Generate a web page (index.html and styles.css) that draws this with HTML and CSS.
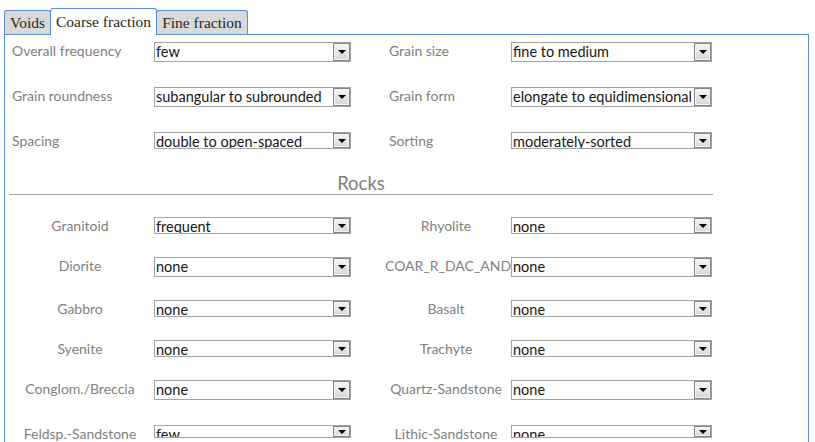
FILE: index.html
```html
<!DOCTYPE html>
<html>
<head>
<meta charset="utf-8">
<link rel="stylesheet" href="styles.css">
</head>
<body>
<div class="tabs">
  <div class="tab tab-voids">Voids</div>
  <div class="tab active tab-coarse">Coarse fraction</div>
  <div class="tab tab-fine">Fine fraction</div>
</div>
<div class="panel">
  <div class="grid props">
    <div class="lbl left">Overall frequency</div>
    <div class="combo h20"><span class="val">few</span><span class="btn"></span></div>
    <div class="lbl right">Grain size</div>
    <div class="combo h20"><span class="val">fine to medium</span><span class="btn"></span></div>

    <div class="lbl left">Grain roundness</div>
    <div class="combo h20"><span class="val">subangular to subrounded</span><span class="btn"></span></div>
    <div class="lbl right">Grain form</div>
    <div class="combo h20"><span class="val">elongate to equidimensional</span><span class="btn"></span></div>

    <div class="lbl left">Spacing</div>
    <div class="combo h17"><span class="val">double to open-spaced</span><span class="btn"></span></div>
    <div class="lbl right">Sorting</div>
    <div class="combo h17"><span class="val">moderately-sorted</span><span class="btn"></span></div>
  </div>

  <div class="section-title">Rocks</div>

  <div class="grid rocks">
    <div class="lbl cl">Granitoid</div>
    <div class="combo h17"><span class="val">frequent</span><span class="btn"></span></div>
    <div class="lbl cr">Rhyolite</div>
    <div class="combo h17"><span class="val">none</span><span class="btn"></span></div>

    <div class="lbl cl">Diorite</div>
    <div class="combo h20"><span class="val">none</span><span class="btn"></span></div>
    <div class="lbl cr">COAR_R_DAC_AND</div>
    <div class="combo h20"><span class="val">none</span><span class="btn"></span></div>

    <div class="lbl cl">Gabbro</div>
    <div class="combo h17"><span class="val">none</span><span class="btn"></span></div>
    <div class="lbl cr">Basalt</div>
    <div class="combo h17"><span class="val">none</span><span class="btn"></span></div>

    <div class="lbl cl">Syenite</div>
    <div class="combo h17"><span class="val">none</span><span class="btn"></span></div>
    <div class="lbl cr">Trachyte</div>
    <div class="combo h17"><span class="val">none</span><span class="btn"></span></div>

    <div class="lbl cl">Conglom./Breccia</div>
    <div class="combo h20"><span class="val">none</span><span class="btn"></span></div>
    <div class="lbl cr">Quartz-Sandstone</div>
    <div class="combo h20"><span class="val">none</span><span class="btn"></span></div>

    <div class="lbl cl">Feldsp.-Sandstone</div>
    <div class="combo h13"><span class="val">few</span><span class="btn"></span></div>
    <div class="lbl cr">Lithic-Sandstone</div>
    <div class="combo h13"><span class="val">none</span><span class="btn"></span></div>
  </div>
</div>
</body>
</html>
```
FILE: styles.css
```css
html, body {
  margin: 0;
  padding: 0;
  background: #ffffff;
  overflow: hidden;
}
body {
  width: 815px;
  height: 442px;
  font-family: Lato, "Liberation Sans", sans-serif;
}

.tabs {
  display: flex;
  align-items: flex-end;
  padding-left: 4px;
  padding-top: 8px;
  height: 26px;
  position: relative;
  z-index: 2;
}
.tab {
  box-sizing: border-box;
  height: 24px;
  border: 1px solid #5b8fdb;
  border-bottom: none;
  border-radius: 3px 3px 0 0;
  background: #d9d9d9;
  font-family: "Liberation Serif", serif;
  font-size: 15.5px;
  line-height: 23px;
  color: #262626;
  text-align: center;
  margin-right: -1px;
}
.tab-voids { width: 47px; }
.tab-coarse { width: 107px; }
.tab-fine { width: 92px; }
.tab.active {
  height: 27px;
  background: #ffffff;
  line-height: 26px;
  margin-bottom: -1px;
}

.panel {
  box-sizing: border-box;
  margin-left: 4px;
  width: 805px;
  height: 440px;
  border: 1px solid #5b8fdb;
  padding: 7px 0 0 7px;
}

.grid {
  display: grid;
  grid-template-columns: 142px 197px 160px 201px;
  align-items: start;
}
.props {
  grid-template-rows: 45px 45px 44px;
}
.rocks {
  margin-top: 22px;
  grid-template-rows: 40px 43px 40px 40px 45px 30px;
}

.lbl {
  font-size: 14px;
  line-height: 18px;
  color: #7f7f7f;
  white-space: nowrap;
}
.lbl.right { padding-left: 38px; }
.lbl.cl { text-align: center; padding-right: 6px; }
.lbl.cr { text-align: center; padding-left: 34px; padding-right: 4px; }

.combo {
  box-sizing: border-box;
  display: flex;
  border: 1px solid #a3a3a3;
  overflow: hidden;
  background: #ffffff;
}
.h20 { height: 20px; }
.h17 { height: 17px; }
.h13 { height: 13px; }

.val {
  flex: 1;
  font-size: 14.5px;
  line-height: 18px;
  padding-left: 1px;
  color: #161616;
  white-space: nowrap;
  overflow: hidden;
}
.btn {
  box-sizing: border-box;
  width: 17px;
  flex: none;
  border: 1px solid #858585;
  box-shadow: inset 0 0 0 1px #f4f4f4;
  background: linear-gradient(#f7f7f7, #d6d6d6);
  display: flex;
  align-items: center;
  justify-content: center;
}
.btn::after {
  content: "";
  width: 0;
  height: 0;
  border-left: 4px solid transparent;
  border-right: 4px solid transparent;
  border-top: 4px solid #000000;
}

.section-title {
  box-sizing: border-box;
  margin-left: -3px;
  width: 704px;
  text-align: center;
  font-size: 18.5px;
  line-height: 14px;
  padding-bottom: 4px;
  color: #7f7f7f;
  border-bottom: 1px solid #a6a6a6;
}
```
